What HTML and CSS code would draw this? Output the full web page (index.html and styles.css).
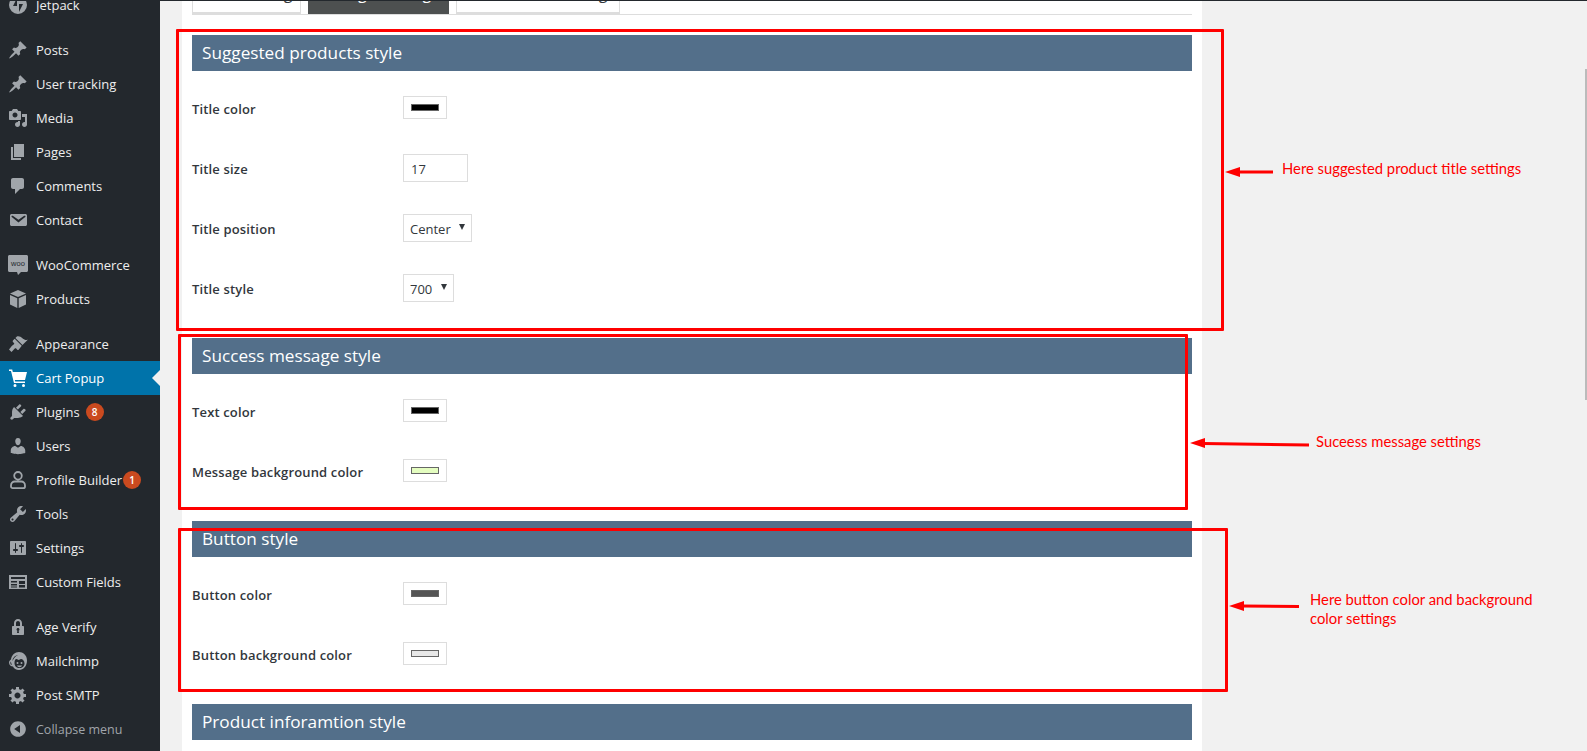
FILE: index.html
```html
<!DOCTYPE html>
<html lang="en">
<head>
  <meta charset="UTF-8" />
  <title>Cart Popup settings</title>
  <link rel="stylesheet" href="styles.css">
</head>
<body>

  <!-- admin menu -->
  <aside class="sidebar">
    <ul class="menu">
      <li class="menu-item">
        <svg class="icon" viewBox="0 0 20 20"><path d="M10 1a9 9 0 1 0 0 18 9 9 0 0 0 0-18zM9 11H5l4-8zm2 6V9h4z" fill-rule="evenodd"/></svg>
        <span>Jetpack</span>
      </li>
      <li class="menu-sep"></li>
      <li class="menu-item">
        <svg class="icon" viewBox="0 0 20 20"><path d="M10.44 3.02l1.82-1.82 6.36 6.35-1.83 1.82c-1.05-.68-2.48-.57-3.41.36l-.75.75c-.92.93-1.04 2.35-.35 3.41l-1.83 1.82-2.41-2.41-2.8 2.79c-.42.42-3.38 2.71-3.8 2.29s1.86-3.39 2.28-3.81l2.79-2.79L4.1 9.36l1.83-1.82c1.05.69 2.48.57 3.4-.36l.75-.75c.93-.92 1.05-2.35.36-3.41z"/></svg>
        <span>Posts</span>
      </li>
      <li class="menu-item">
        <svg class="icon" viewBox="0 0 20 20"><path d="M10.44 3.02l1.82-1.82 6.36 6.35-1.83 1.82c-1.05-.68-2.48-.57-3.41.36l-.75.75c-.92.93-1.04 2.35-.35 3.41l-1.83 1.82-2.41-2.41-2.8 2.79c-.42.42-3.38 2.71-3.8 2.29s1.86-3.39 2.28-3.81l2.79-2.79L4.1 9.36l1.83-1.82c1.05.69 2.48.57 3.4-.36l.75-.75c.93-.92 1.05-2.35.36-3.41z"/></svg>
        <span>User tracking</span>
      </li>
      <li class="menu-item">
        <svg class="icon" viewBox="0 0 20 20"><path d="M13 11V4c0-.55-.45-1-1-1h-1.67L9 1H5L3.67 3H2c-.55 0-1 .45-1 1v7c0 .55.45 1 1 1h10c.55 0 1-.45 1-1zM7 4.5c1.38 0 2.5 1.12 2.5 2.5S8.38 9.5 7 9.5 4.5 8.38 4.5 7 5.62 4.5 7 4.5zM14 6h5v10.5c0 1.38-1.12 2.5-2.5 2.5S14 17.88 14 16.5s1.12-2.5 2.5-2.5c.17 0 .34.02.5.05V9h-3V6zm-4 8.05V13h2v3.5c0 1.38-1.12 2.5-2.5 2.5S7 17.88 7 16.5 8.12 14 9.5 14c.17 0 .34.02.5.05z"/></svg>
        <span>Media</span>
      </li>
      <li class="menu-item">
        <svg class="icon" viewBox="0 0 20 20"><path d="M6 15V2h10v13H6zm-1 1h8v2H3V5h2v11z"/></svg>
        <span>Pages</span>
      </li>
      <li class="menu-item">
        <svg class="icon" viewBox="0 0 20 20"><path d="M5 2h9c1.1 0 2 .9 2 2v7c0 1.1-.9 2-2 2h-2l-5 5v-5H5c-1.1 0-2-.9-2-2V4c0-1.1.9-2 2-2z"/></svg>
        <span>Comments</span>
      </li>
      <li class="menu-item">
        <svg class="icon" viewBox="0 0 20 20"><path d="M3.87 4h13.25C18.37 4 19 4.59 19 5.79v8.42c0 1.19-.63 1.79-1.88 1.79H3.87c-1.25 0-1.88-.6-1.88-1.79V5.79c0-1.2.63-1.79 1.88-1.79zm6.62 8.6l6.74-5.53c.24-.2.43-.66.13-1.07-.29-.41-.82-.42-1.17-.17l-5.7 3.86L4.8 5.83c-.35-.25-.88-.24-1.17.17-.3.41-.11.87.13 1.07z"/></svg>
        <span>Contact</span>
      </li>
      <li class="menu-sep"></li>
      <li class="menu-item">
        <svg class="icon" viewBox="0 0 20 20"><path d="M1.500 0h17c.8 0 1.500.7 1.500 1.500v14c0 .8-.7 1.500-1.500 1.500H13l-3 3-1-3H1.500C.7 17 0 16.300 0 15.500v-14C0 .7.700 0 1.500 0z"/><text class="woo-mark" x="10" y="11" text-anchor="middle">woo</text></svg>
        <span>WooCommerce</span>
      </li>
      <li class="menu-item">
        <svg class="icon" viewBox="0 0 20 20"><path d="M10 1l8 3.500L10 8 2 4.500zM2 6l7.300 3.300V19L2 15.500zM18 6v9.500L10.700 19V9.300z"/></svg>
        <span>Products</span>
      </li>
      <li class="menu-sep"></li>
      <li class="menu-item">
        <svg class="icon" viewBox="0 0 20 20"><path d="M14.480 11.060L7.410 3.990l1.500-1.500c.5-.56 2.300-.47 3.510.32 1.210.8 1.430 1.280 2.910 2.100 1.180.64 2.450 1.260 4.450.85zm-.71.71L6.700 4.700 4.930 6.470c-.39.39-.39 1.020 0 1.410l1.060 1.060c.39.39.39 1.030 0 1.420-.6.6-1.430 1.110-2.210 1.690L1 15.500 3.500 18l3.300-3.400c.4-.4 1-.4 1.400 0l1.060 1.060c.39.39 1.020.39 1.410 0z"/></svg>
        <span>Appearance</span>
      </li>
      <li class="menu-item is-current">
        <svg class="icon" viewBox="0 0 20 20"><path d="M1 1.500h3.200l.6 2.500H19l-2 8H6.800l.4 1.500H17V15H6L3 3H1zM7 16a1.500 1.500 0 1 1 0 3 1.500 1.500 0 0 1 0-3zm8.500 0a1.500 1.500 0 1 1 0 3 1.500 1.500 0 0 1 0-3z"/></svg>
        <span>Cart Popup</span>
      </li>
      <li class="menu-item">
        <svg class="icon" viewBox="0 0 20 20"><path d="M13.110 4.360L9.870 7.600 8 5.730l3.240-3.240c.35-.34 1.050-.2 1.560.32.52.51.66 1.210.31 1.550zm-8 1.770l.91-1.120 9.010 9.010-1.190.84c-.71.71-2.630 1.160-3.820 1.160H6.140L4.900 17.260c-.59.59-1.540.59-2.120 0-.59-.58-.59-1.530 0-2.120l1.240-1.240v-3.880c0-1.130.4-3.190 1.090-3.890zm7.260 3.970l3.240-3.240c.34-.35 1.040-.21 1.550.31.52.51.66 1.210.31 1.550l-3.240 3.250z"/></svg>
        <span>Plugins</span>
        <b class="badge badge-plugins">8</b>
      </li>
      <li class="menu-item">
        <svg class="icon" viewBox="0 0 20 20"><path d="M10 9.250c-2.270 0-2.730-3.440-2.730-3.440C7 4.020 7.820 2 9.970 2c2.160 0 2.980 2.020 2.710 3.810 0 0-.41 3.440-2.680 3.440zm0 2.570L12.720 10c2.390 0 4.520 2.330 4.520 4.530v2.490s-3.650 1.130-7.240 1.130c-3.650 0-7.240-1.130-7.240-1.130v-2.490c0-2.250 1.940-4.480 4.470-4.480z"/></svg>
        <span>Users</span>
      </li>
      <li class="menu-item">
        <svg class="icon" viewBox="0 0 20 20"><path class="outline" d="M10 2a3.800 3.800 0 1 1 0 7.600A3.800 3.800 0 0 1 10 2zM6.800 11.500h6.400c2.200 0 3.800 1.800 3.800 4v1c0 1-.7 1.700-1.700 1.700H4.700c-1 0-1.700-.7-1.700-1.700v-1c0-2.200 1.600-4 3.800-4z"/></svg>
        <span>Profile Builder</span>
        <b class="badge badge-profile">1</b>
      </li>
      <li class="menu-item">
        <svg class="icon" viewBox="0 0 20 20"><path d="M16.680 9.770c-1.340 1.340-3.300 1.670-4.950.99l-5.410 6.520c-.99.99-2.590.99-3.580 0s-.99-2.590 0-3.570l6.520-5.420c-.68-1.650-.35-3.610.99-4.950 1.280-1.280 3.120-1.620 4.720-1.060l-2.890 2.890 2.820 2.820 2.860-2.870c.53 1.580.18 3.390-1.080 4.650zM3.810 16.210c.4.39 1.040.39 1.430 0 .4-.4.4-1.040 0-1.430-.39-.4-1.030-.4-1.430 0-.39.39-.39 1.030 0 1.430z"/></svg>
        <span>Tools</span>
      </li>
      <li class="menu-item">
        <svg class="icon" viewBox="0 0 20 20"><path d="M18 16V4c0-.55-.45-1-1-1H3c-.55 0-1 .45-1 1v12c0 .55.45 1 1 1h14c.55 0 1-.45 1-1zM8 11h1c.55 0 1 .45 1 1s-.45 1-1 1H8v1.500c0 .28-.22.5-.5.5s-.5-.22-.5-.5V13H6c-.55 0-1-.45-1-1s.45-1 1-1h1V5.500c0-.28.22-.5.5-.5s.5.22.5.5V11zm5-2h-1c-.55 0-1-.45-1-1s.45-1 1-1h1V5.500c0-.28.22-.5.5-.5s.5.22.5.5V7h1c.55 0 1 .45 1 1s-.45 1-1 1h-1v5.500c0 .28-.22.5-.5.5s-.5-.22-.5-.5V9z"/></svg>
        <span>Settings</span>
      </li>
      <li class="menu-item">
        <svg class="icon" viewBox="0 0 20 20"><path fill-rule="evenodd" d="M1 3h18v14H1zM3 5v2h14V5zM3 9v1.500h6V9zM11 9v3h6V9zM3 12v1.500h6V12zM3 14.500V15.500h6v-1zM11 13v2.500h6V13z"/></svg>
        <span>Custom Fields</span>
      </li>
      <li class="menu-sep"></li>
      <li class="menu-item">
        <svg class="icon" viewBox="0 0 20 20"><path d="M14 9h1c.55 0 1 .45 1 1v7c0 .55-.45 1-1 1H5c-.55 0-1-.45-1-1v-7c0-.55.45-1 1-1h1V6c0-2.210 1.790-4 4-4s4 1.790 4 4v3zm-2 0V6c0-1.100-.9-2-2-2s-2 .9-2 2v3h4zm-1 7l-.36-2.150c.51-.24.86-.75.86-1.350 0-.83-.67-1.500-1.500-1.500s-1.500.67-1.500 1.500c0 .6.35 1.110.86 1.350L9 16h2z"/></svg>
        <span>Age Verify</span>
      </li>
      <li class="menu-item">
        <svg class="icon" viewBox="0 0 20 20"><path fill-rule="evenodd" d="M11 1c4 0 8 3 8 8.500 0 5.500-3.500 9.500-8 9.500-3 0-5-1.500-6-3.500-2 0-4-1.500-4-4 0-1.500 1-2.500 2-3C3.500 4 7 1 11 1zM10 4c-3 .5-5.500 3-5.500 6 1-2.500 3-5 5.500-6zM8.500 8c-1.500 0-2 1.800-2 4 0 3 2 5 5 5s5-2 5-4.500c0-3-2-4.500-3.500-4.500-1 0-1.500 1-2.300 1S9.500 8 8.500 8zM2.800 10.500l1 3.500-.8-.3c-.8-.8-.8-2.400-.2-3.200zM9.500 11a1 1 0 1 1 0 2 1 1 0 0 1 0-2zm4 0a1 1 0 1 1 0 2 1 1 0 0 1 0-2zM9 14.500h5c-.4 1.200-1.300 1.700-2.500 1.700S9.400 15.700 9 14.500z"/></svg>
        <span>Mailchimp</span>
      </li>
      <li class="menu-item">
        <svg class="icon" viewBox="0 0 20 20"><path d="M18 12h-2.180c-.17.7-.44 1.350-.81 1.930l1.540 1.540-2.100 2.100-1.540-1.540c-.58.36-1.230.63-1.910.79V19H8v-2.180c-.68-.16-1.330-.43-1.910-.79l-1.540 1.540-2.120-2.120 1.540-1.540c-.36-.58-.63-1.230-.79-1.910H1V9.030h2.170c.16-.7.44-1.350.8-1.940L2.430 5.550l2.100-2.100 1.540 1.540c.58-.37 1.240-.64 1.930-.81V2h3v2.180c.68.16 1.330.43 1.910.79l1.540-1.540 2.120 2.120-1.540 1.540c.36.59.64 1.240.8 1.940H18V12zm-8.500 1.500c1.660 0 3-1.340 3-3s-1.340-3-3-3-3 1.340-3 3 1.340 3 3 3z"/></svg>
        <span>Post SMTP</span>
      </li>
      <li class="menu-item is-collapse">
        <svg class="icon" viewBox="0 0 20 20"><path d="M10 2.160c4.330 0 7.840 3.510 7.840 7.840s-3.510 7.840-7.840 7.840S2.160 14.330 2.160 10 5.710 2.160 10 2.160zm2 11.720V6.120L6.180 9.970z"/></svg>
        <span>Collapse menu</span>
      </li>
    </ul>
  </aside>

  <!-- settings panel -->
  <main class="panel">
    <nav class="tabs">
      <a class="tab tab-main">Main setting</a>
      <a class="tab tab-design is-active">Design setting</a>
      <a class="tab tab-button">Button text setting</a>
    </nav>

    <section class="group">
      <h2>Suggested products style</h2>
      <div class="row">
        <label>Title color</label>
        <input class="swatch" type="color" value="#000000">
      </div>
      <div class="row">
        <label>Title size</label>
        <input class="field" type="text" value="17">
      </div>
      <div class="row">
        <label>Title position</label>
        <div class="select-wrap">
          <select class="select-center"><option>Center</option></select>
        </div>
      </div>
      <div class="row">
        <label>Title style</label>
        <div class="select-wrap">
          <select class="select-weight"><option>700</option></select>
        </div>
      </div>
    </section>

    <section class="group">
      <h2>Success message style</h2>
      <div class="row">
        <label>Text color</label>
        <input class="swatch" type="color" value="#000000">
      </div>
      <div class="row">
        <label>Message background color</label>
        <input class="swatch" type="color" value="#e4fdc0">
      </div>
    </section>

    <section class="group">
      <h2>Button style</h2>
      <div class="row">
        <label>Button color</label>
        <input class="swatch" type="color" value="#555555">
      </div>
      <div class="row">
        <label>Button background color</label>
        <input class="swatch" type="color" value="#e8e8e8">
      </div>
    </section>

    <section class="group">
      <h2>Product inforamtion style</h2>
    </section>
  </main>

  <div class="scroll-thumb"></div>
  <div class="top-edge"></div>

  <!-- red notes drawn over the screenshot -->
  <div class="mark mark-one"></div>
  <div class="mark mark-two"></div>
  <div class="mark mark-three"></div>

  <svg class="arrows" viewBox="0 0 1587 751">
    <path d="M1273 172H1238"/>
    <polygon points="1225,172 1240,167 1240,177"/>
    <path d="M1309 445L1203 443.500"/>
    <polygon points="1190,443 1205,438 1205,448"/>
    <path d="M1299 606.500L1242 606"/>
    <polygon points="1229,606 1244,601 1244,611"/>
  </svg>

  <p class="note note-one">Here suggested product title settings</p>
  <p class="note note-two">Suceess message settings</p>
  <p class="note note-three">Here button color and background<br>color settings</p>

</body>
</html>
```

FILE: styles.css
```css
html, body {
  height: 751px;
  overflow: hidden;
}
body {
  margin: 0;
  position: relative;
  display: flex;
  align-items: flex-start;
  background: #f1f1f1;
  color: #32373c;
  font-family: 'Open Sans', sans-serif;
  font-size: 13px;
}

/* admin menu */
.sidebar {
  flex: none;
  width: 160px;
  height: 751px;
  background: #23282d;
  overflow: hidden;
}
.menu {
  list-style: none;
  margin: -12px 0 0;
  padding: 0;
}
.menu-sep { height: 11px; }
.menu-item {
  position: relative;
  display: flex;
  align-items: center;
  gap: 8px;
  height: 34px;
  padding-left: 8px;
  color: #eee;
  font-size: 13px;
}
.icon {
  flex: none;
  width: 20px;
  height: 20px;
  fill: #a0a5aa;
}
.icon .outline {
  fill: none;
  stroke: #a0a5aa;
  stroke-width: 1.8;
}
.woo-mark {
  fill: #23282d;
  font-family: 'Liberation Sans', sans-serif;
  font-size: 7.500px;
}
.is-current {
  background: #0073aa;
  color: #fff;
}
.is-current .icon { fill: #fff; }
.is-current::after {
  content: "";
  position: absolute;
  right: 0;
  top: 9px;
  border: 8px solid transparent;
  border-left: 0;
  border-right-color: #f1f1f1;
}
.is-collapse { color: #a0a5aa; font-size: 12.500px; }
.badge {
  display: flex;
  align-items: center;
  justify-content: center;
  width: 18px;
  height: 18px;
  border-radius: 50%;
  background: #ca4a1f;
  color: #fff;
  font-size: 10px;
  font-weight: 600;
}
.badge-plugins { margin-left: -2px; }
.badge-profile { margin-left: -7px; }

/* settings panel */
.panel {
  flex: none;
  box-sizing: border-box;
  width: 1020px;
  margin-left: 22px;
  padding: 0 10px;
  background: #fff;
}
.tabs {
  display: flex;
  height: 14px;
  margin-bottom: 20px;
  border-bottom: 1px solid #ddd;
  font-size: 16px;
  line-height: 22px;
}
.tab {
  box-sizing: border-box;
  height: 35px;
  margin-top: -21px;
  padding-top: 2px;
  border: 1px solid #ddd;
  border-bottom-width: 2px;
  text-align: center;
  background: #fff;
}
.tab-main { width: 109px; margin-right: 7px; }
.tab-design { width: 141px; margin-right: 7px; border-color: #4d5050; background: #4d5050; color: #fff; }
.tab-button { width: 164px; }

.group { margin-bottom: 19px; }
.group h2 {
  height: 36px;
  margin: 0 0 8px;
  padding-left: 10px;
  background: #536f8a;
  color: #fff;
  font-size: 17.200px;
  font-weight: 400;
  line-height: 36px;
}
.row {
  display: flex;
  align-items: center;
  height: 60px;
}
.row label {
  flex: none;
  width: 211px;
  font-weight: 600;
  letter-spacing: 0.15px;
}

.swatch {
  display: block;
  box-sizing: border-box;
  width: 44px;
  height: 23px;
  margin: -3px 0 0;
  padding: 0;
  border: 1px solid #ddd;
  background: #fff;
}
.swatch::-webkit-color-swatch-wrapper { padding: 7px; }
.swatch::-webkit-color-swatch { border: 1px solid #666; border-radius: 0; }

.field {
  box-sizing: border-box;
  width: 65px;
  height: 28px;
  margin: -2px 0 0;
  padding: 1px 7px 0;
  border: 1px solid #ddd;
  color: #32373c;
  font: 13px 'Open Sans', sans-serif;
}
.select-wrap {
  position: relative;
  margin-top: -2px;
}
.select-wrap::after {
  content: "";
  position: absolute;
  right: 7px;
  top: 10px;
  border: 3.500px solid transparent;
  border-bottom: 0;
  border-top: 6px solid #32373c;
}
.select-wrap select {
  display: block;
  box-sizing: border-box;
  height: 28px;
  padding: 1px 0 0 6px;
  border: 1px solid #ddd;
  border-radius: 0;
  background: #fff;
  color: #32373c;
  font: 13px 'Open Sans', sans-serif;
  appearance: none;
}
.select-center { width: 69px; }
.select-weight { width: 51px; }

/* page chrome */
.top-edge {
  position: absolute;
  left: 0;
  top: 0;
  width: 100%;
  height: 1px;
  background: #23282d;
}
.scroll-thumb {
  position: absolute;
  left: 1585px;
  top: 69px;
  width: 2px;
  height: 331px;
  background: #bbb;
}

/* notes */
.mark {
  position: absolute;
  box-sizing: border-box;
  border: 3px solid #f00;
  border-radius: 1px;
}
.mark-one { left: 176px; top: 29px; width: 1048px; height: 302px; }
.mark-two { left: 178px; top: 334px; width: 1010px; height: 176px; }
.mark-three { left: 178px; top: 528px; width: 1050px; height: 164px; }
.arrows {
  position: absolute;
  left: 0;
  top: 0;
  width: 1587px;
  height: 751px;
  fill: #f00;
  stroke: none;
}
.arrows path {
  fill: none;
  stroke: #f00;
  stroke-width: 3;
}
.note {
  position: absolute;
  margin: 0;
  color: #f00;
  font-family: Lato, sans-serif;
  font-size: 14.800px;
  line-height: 19px;
  white-space: nowrap;
}
.note-one { left: 1282px; top: 159px; }
.note-two { left: 1316px; top: 432px; }
.note-three { left: 1310px; top: 590px; }
```
